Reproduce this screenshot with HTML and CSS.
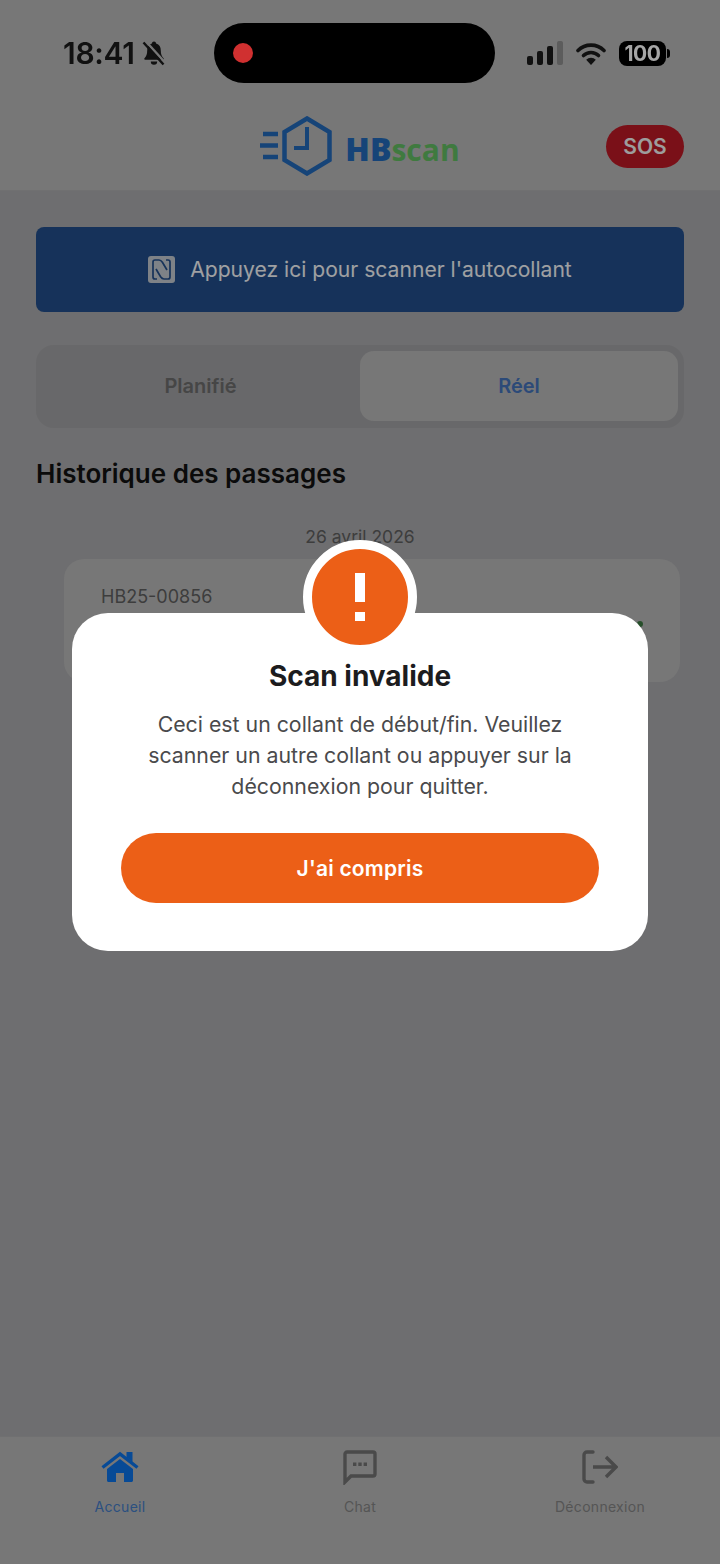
FILE: index.html
```html
<!DOCTYPE html>
<html lang="fr">

<head>
  <meta charset="UTF-8">
  <meta name="viewport" content="width=device-width, initial-scale=1.0">
  <title>HBscan</title>
  <link rel="stylesheet" href="styles.css">
</head>

<body>
  <header class="top">
    <div class="status-bar">
      <div class="status-left">
        <span class="clock">18:41</span>
        <svg class="bell" viewBox="0 0 26 26" width="26" height="26">
          <path d="M13 1.500c-1.200 0-2 .8-2.100 1.900C7.700 4.300 6.200 6.900 6.200 10.500c0 3.800-.9 5.900-2.700 7.800-.6.600-.2 1.500.7 1.500h17.600c.9 0 1.300-.9.700-1.500-1.800-1.900-2.700-4-2.700-7.800 0-3.600-1.500-6.200-4.700-7.100C15 2.300 14.200 1.500 13 1.500z" fill="#111" />
          <path d="M9.800 21.500h6.400a3.200 3.200 0 0 1-6.400 0z" fill="#111" />
          <path d="M4.500 1l20 22" stroke="#777" stroke-width="2.500" />
          <path d="M2.500 2.500l20 22" stroke="#111" stroke-width="2.400" />
        </svg>
      </div>
      <div class="island"><span class="rec-dot"></span></div>
      <div class="status-right">
        <svg viewBox="0 0 36 24" width="36" height="24">
          <rect x="0" y="15" width="6" height="9" rx="2" fill="#111" />
          <rect x="10" y="10" width="6" height="14" rx="2" fill="#111" />
          <rect x="20" y="5" width="6" height="19" rx="2" fill="#111" />
          <rect x="30" y="0" width="6" height="24" rx="2" fill="#5c5c5c" />
        </svg>
        <svg class="wifi" viewBox="0 0 30 23" width="30" height="23">
          <path d="M2 8.500a18.500 18.500 0 0 1 26 0" fill="none" stroke="#111" stroke-width="3.600" stroke-linecap="round" />
          <path d="M7.500 13.500a10.700 10.700 0 0 1 15 0" fill="none" stroke="#111" stroke-width="3.600" stroke-linecap="round" />
          <path d="M15 23l-4.800-5.200a6.800 6.800 0 0 1 9.600 0z" fill="#111" />
        </svg>
        <span class="battery">100</span>
      </div>
    </div>

    <div class="brand-row">
      <span></span>
      <div class="logo">
        <svg viewBox="0 0 72 60" width="72" height="60">
          <path d="M3 18h15M0 29.500h18M3 41h15" stroke="#2369b9" stroke-width="4.500" />
          <path d="M47 2.500l22.500 13.500v28L47 57.500 24.500 44V16z" fill="none" stroke="#2369b9" stroke-width="4.500" />
          <path d="M47 11v21H34" fill="none" stroke="#2369b9" stroke-width="4" />
        </svg>
        <span class="logo-text"><b>HB</b><i>scan</i></span>
      </div>
      <button class="sos">SOS</button>
    </div>
  </header>

  <main class="content">
    <button class="scan-btn">
      <svg viewBox="0 0 27 27" width="27" height="27">
        <rect width="27" height="27" rx="3" fill="#c2c8d0" />
        <path d="M9 23H7c-1.500 0-2-1-2-2V6c0-1.500.7-2 2-2h4c1.800 0 2.600 1 3.400 2.200L19 14" fill="none" stroke="#234e8a" stroke-width="1.700" />
        <path d="M18 4h2c1.500 0 2 1 2 2v15c0 1.500-.7 2-2 2h-4c-1.800 0-2.600-1-3.400-2.200L8 13" fill="none" stroke="#234e8a" stroke-width="1.700" />
      </svg>
      Appuyez ici pour scanner l'autocollant
    </button>

    <div class="tabs">
      <div class="tab">Planifié</div>
      <div class="tab active">Réel</div>
    </div>

    <h2 class="section-title">Historique des passages</h2>
    <div class="day">26 avril 2026</div>
    <div class="pass-card">
      <span class="pass-id">HB25-00856</span>
      <span class="pass-mark"></span>
    </div>
  </main>

  <nav class="tabbar">
    <div class="nav-item current">
      <svg viewBox="0 0 38 30" width="38" height="30">
        <path d="M1.500 15.500 19 2l17.500 13.500" fill="none" stroke="#0c72e7" stroke-width="3.400" />
        <path d="M25.500 0h6v10l-6-4.500z" fill="#0c72e7" />
        <path d="M19 7 6 17v11.500c0 .8.700 1.500 1.500 1.500H15v-9h8v9h7.500c.8 0 1.500-.7 1.500-1.500V17z" fill="#0c72e7" />
      </svg>
      <span>Accueil</span>
    </div>
    <div class="nav-item">
      <svg viewBox="0 0 34 34" width="34" height="34">
        <path d="M2 32V4c0-1.100.9-2 2-2h26c1.100 0 2 .9 2 2v20c0 1.100-.9 2-2 2H8z" fill="none" stroke="#727272" stroke-width="3.400" />
        <path d="M10 12.500h3.400v3.400H10zM15.300 12.500h3.400v3.400h-3.400zM20.600 12.500H24v3.400h-3.400z" fill="#727272" />
      </svg>
      <span>Chat</span>
    </div>
    <div class="nav-item">
      <svg viewBox="0 0 36 34" width="36" height="34">
        <path d="M11 2H5C3.300 2 2 3.300 2 5v24c0 1.700 1.300 3 3 3h6" fill="none" stroke="#727272" stroke-width="3.400" stroke-linecap="round" />
        <path d="M11 17h22M24 7l10 10-10 10" fill="none" stroke="#727272" stroke-width="3.400" />
      </svg>
      <span>Déconnexion</span>
    </div>
  </nav>

  <div class="overlay">
    <div class="modal">
      <div class="modal-badge">
        <svg viewBox="0 0 10 48" width="10" height="48">
          <rect width="10" height="29" fill="#fff" />
          <rect y="39" width="10" height="9" fill="#fff" />
        </svg>
      </div>
      <h3 class="modal-title">Scan invalide</h3>
      <p class="modal-text">Ceci est un collant de début/fin. Veuillez scanner un autre collant ou appuyer sur la déconnexion pour quitter.</p>
      <button class="modal-btn">J'ai compris</button>
    </div>
  </div>
</body>

</html>
```

FILE: styles.css
```css
* {
  box-sizing: border-box;
}

body {
  display: flex;
  flex-direction: column;
  height: 100vh;
  margin: 0;
  overflow: hidden;
  font-family: Inter, 'Liberation Sans', sans-serif;
  background-color: #a9a9ac;
  color: #111;
}

button {
  border: none;
  font-family: inherit;
}

.top {
  height: 191px;
  background-color: #b7b7b7;
  border-bottom: 1px solid #adadae;
}

/* system bar sits above the dim layer */
.status-bar {
  position: relative;
  z-index: 2;
  display: flex;
  justify-content: space-between;
  height: 100px;
  padding: 23px 50px 0 63px;
}

.status-left {
  display: flex;
  align-items: center;
  gap: 6px;
  width: 151px;
  height: 60px;
}

.clock {
  font-size: 30px;
  font-weight: 600;
  letter-spacing: -0.3px;
}

.island {
  display: flex;
  align-items: center;
  width: 282px;
  height: 60px;
  padding-left: 19px;
  border-radius: 30px;
  background-color: #000;
}

.rec-dot {
  width: 20px;
  height: 20px;
  border-radius: 50%;
  background-color: #d03030;
}

.status-right {
  display: flex;
  align-items: center;
  gap: 13px;
  height: 60px;
  margin-left: 32px;
  margin-right: 4px;
}

.battery {
  position: relative;
  width: 47px;
  height: 25px;
  border-radius: 8px;
  background-color: #000;
  color: #a6a6a6;
  font-size: 21px;
  font-weight: 700;
  line-height: 25px;
  text-align: center;
  letter-spacing: -0.5px;
}

.battery::after {
  content: '';
  position: absolute;
  top: 8px;
  right: -4px;
  width: 3px;
  height: 9px;
  border-radius: 0 3px 3px 0;
  background-color: #000;
}

.brand-row {
  display: grid;
  grid-template-columns: 1fr auto 1fr;
  align-items: center;
  height: 90px;
  padding: 2px 36px 0;
}

.logo {
  display: flex;
  align-items: center;
  gap: 13px;
  margin-top: -1px;
}

.logo-text {
  font-family: 'Open Sans', sans-serif;
  font-size: 32px;
  font-weight: 800;
  line-height: 1;
  padding-top: 6px;
}

.logo-text b {
  font-weight: 800;
  color: #2369b9;
}

.logo-text i {
  font-style: normal;
  font-size: 30px;
  font-weight: 700;
  color: #61bc62;
}

.sos {
  justify-self: end;
  width: 78px;
  height: 43px;
  border-radius: 22px;
  background-color: #bc1925;
  color: #f2f2f2;
  font-size: 21px;
  font-weight: 600;
}

.content {
  flex: 1;
  padding: 36px 36px 0;
}

.scan-btn {
  display: flex;
  align-items: center;
  justify-content: center;
  gap: 15px;
  width: 100%;
  height: 85px;
  border-radius: 8px;
  background-color: #234e8a;
  color: #f4f6f9;
  font-size: 21.100px;
}

.tabs {
  display: flex;
  gap: 6px;
  height: 83px;
  margin-top: 33px;
  padding: 6px 6px 7px;
  border-radius: 18px;
  background-color: #a0a0a3;
}

.tab {
  flex: 1;
  display: flex;
  align-items: center;
  justify-content: center;
  padding-left: 5px;
  border-radius: 14px;
  color: #6c6c6c;
  font-size: 20px;
  font-weight: 600;
}

.tab.active {
  flex: 0 0 318px;
  padding-left: 0;
  background-color: #b7b7b7;
  color: #4472b9;
}

.section-title {
  margin: 30px 0 0;
  font-size: 26px;
  font-weight: 600;
  line-height: 32px;
}

.day {
  margin-top: 35px;
  color: #5e5e5e;
  font-size: 17.500px;
  line-height: 24px;
  text-align: center;
}

.pass-card {
  position: relative;
  height: 123px;
  margin: 10px 4px 0 28px;
  padding: 27px 37px;
  border-radius: 20px;
  background-color: #b7b7b7;
}

.pass-id {
  color: #5e5e5e;
  font-size: 18px;
}

.pass-mark {
  position: absolute;
  top: 62px;
  right: 37px;
  width: 6px;
  height: 6px;
  border-radius: 50%;
  background-color: #3d7a42;
}

.tabbar {
  display: grid;
  grid-template-columns: repeat(3, 1fr);
  height: 128px;
  padding-top: 12px;
  background-color: #b7b7b7;
  border-top: 1px solid #adadae;
}

.nav-item {
  display: flex;
  flex-direction: column;
  align-items: center;
  color: #838383;
  font-size: 14px;
  letter-spacing: 0.3px;
}

.nav-item svg {
  height: 36px;
  margin-bottom: 13px;
}

.nav-item.current {
  color: #447bc5;
}

.overlay {
  position: fixed;
  inset: 0;
  z-index: 1;
  display: flex;
  align-items: center;
  justify-content: center;
  background-color: rgba(0, 0, 0, 0.35);
}

.modal {
  position: relative;
  width: 576px;
  height: 338px;
  padding: 45px 49px 0;
  border-radius: 36px;
  background-color: #fff;
  text-align: center;
}

.modal-badge {
  position: absolute;
  top: -73px;
  left: 231px;
  display: flex;
  align-items: center;
  justify-content: center;
  width: 114px;
  height: 114px;
  border: 9px solid #fff;
  border-radius: 50%;
  background-color: #ec5f17;
}

.modal-title {
  margin: 0;
  color: #1c1c1e;
  font-size: 28px;
  font-weight: 700;
  line-height: 36px;
}

.modal-text {
  margin: 15px 0 0;
  padding: 0 15px;
  color: #4a4a4c;
  font-size: 21.300px;
  line-height: 31px;
}

.modal-btn {
  width: 100%;
  height: 70px;
  margin-top: 31px;
  border-radius: 35px;
  background-color: #ec5f17;
  color: #fff;
  font-size: 21px;
  font-weight: 600;
  letter-spacing: 0.2px;
}
```
